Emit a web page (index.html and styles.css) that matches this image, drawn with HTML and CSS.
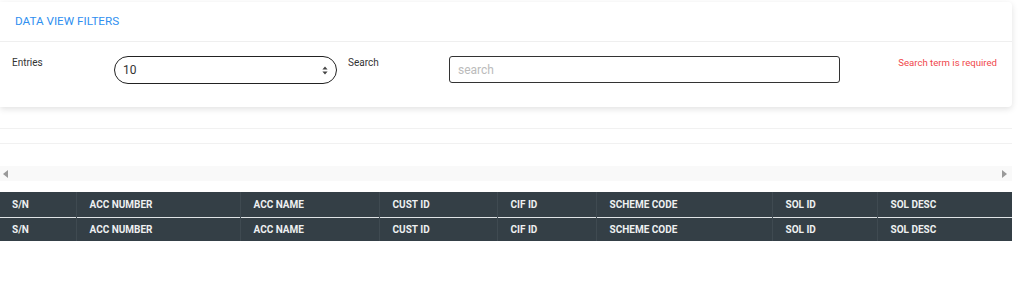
FILE: index.html
```html
<!DOCTYPE html>
<html lang="en">
<head>
  <meta charset="UTF-8" />
  <meta name="viewport" content="width=device-width, initial-scale=1.0" />
  <title>Data View</title>
  <link rel="stylesheet" href="styles.css">
</head>
<body>
  <div class="container">
    <div class="filter-card">
      <div class="card-header">DATA VIEW FILTERS</div>
      <div class="card-body">
        <label class="field-label" for="entries">Entries</label>
        <div class="select-wrap">
          <select id="entries" class="entries-select">
            <option>10</option>
            <option>25</option>
            <option>50</option>
            <option>100</option>
          </select>
          <span class="select-arrows">
            <svg width="6" height="9" viewBox="0 0 6 9"><path d="M3 0.5 L5.6 3.6 H0.4 Z M3 8.5 L5.6 5.4 H0.4 Z" fill="#444"/></svg>
          </span>
        </div>
        <label class="field-label search-label" for="searchInput">Search</label>
        <input type="text" id="searchInput" class="search-input" placeholder="search" />
        <div class="error-text">Search term is required</div>
      </div>
    </div>

    <hr class="divider first">
    <hr class="divider">

    <div class="scroll-track">
      <span class="arrow left"></span>
      <span class="arrow right"></span>
    </div>

    <table class="data-table">
      <thead>
        <tr>
          <th class="c-sn">S/N</th>
          <th class="c-accno">ACC NUMBER</th>
          <th class="c-accname">ACC NAME</th>
          <th class="c-cust">CUST ID</th>
          <th class="c-cif">CIF ID</th>
          <th class="c-scheme">SCHEME CODE</th>
          <th class="c-sol">SOL ID</th>
          <th class="c-desc">SOL DESC</th>
        </tr>
      </thead>
      <tfoot>
        <tr>
          <th>S/N</th>
          <th>ACC NUMBER</th>
          <th>ACC NAME</th>
          <th>CUST ID</th>
          <th>CIF ID</th>
          <th>SCHEME CODE</th>
          <th>SOL ID</th>
          <th>SOL DESC</th>
        </tr>
      </tfoot>
    </table>
  </div>
</body>
</html>
```

FILE: styles.css
```css
body {
  font-family: Roboto, "Liberation Sans", Arial, sans-serif;
  margin: 0;
  padding: 0;
  background-color: #fff;
  color: #333;
}
.container {
  width: 1012px;
  padding-top: 2px;
}
.filter-card {
  background-color: #fff;
  border-radius: 0 4px 4px 0;
  box-shadow: 0 2px 6px rgba(0, 0, 0, 0.12);
}
.card-header {
  height: 39px;
  line-height: 39px;
  padding-left: 15px;
  font-size: 11.7px;
  color: #2f8ff0;
  border-bottom: 1px solid #efefef;
}
.card-body {
  display: grid;
  grid-template-columns: 102px 223px 112px 391px 1fr;
  padding: 14px 15px 23px 12px;
  align-items: start;
}
.field-label {
  font-size: 10px;
  color: #333;
  margin-top: 1px;
  line-height: 12px;
}
.search-label {
  margin-left: 11px;
}
.select-wrap {
  position: relative;
  width: 223px;
}
.entries-select {
  appearance: none;
  -webkit-appearance: none;
  width: 223px;
  height: 28px;
  border: 1px solid #222;
  border-radius: 14px;
  background: #fff;
  padding: 0 0 0 8px;
  font-family: inherit;
  font-size: 12px;
  color: #333;
  outline: none;
}
.select-arrows {
  position: absolute;
  right: 9px;
  top: 10px;
  line-height: 0;
}
.search-input {
  width: 391px;
  height: 27px;
  box-sizing: border-box;
  border: 1px solid #333;
  border-radius: 3px;
  padding: 0 8px;
  font-family: inherit;
  font-size: 12px;
  outline: none;
}
.search-input::placeholder {
  color: #bbb;
}
.error-text {
  font-size: 9.6px;
  color: #f0484b;
  text-align: right;
  line-height: 12px;
  margin-top: 1px;
}
.divider {
  border: none;
  border-top: 1px solid #f1f1f1;
  margin: 0;
}
.divider.first {
  margin-top: 21px;
}
.divider + .divider {
  margin-top: 14px;
}
.scroll-track {
  display: flex;
  justify-content: space-between;
  align-items: center;
  height: 15px;
  margin-top: 22px;
  padding: 0 5px 0 3px;
  background-color: #f9f9f9;
}
.arrow {
  width: 0;
  height: 0;
  border-top: 4.5px solid transparent;
  border-bottom: 4.5px solid transparent;
}
.arrow.left {
  border-right: 5px solid #9a9a9a;
}
.arrow.right {
  border-left: 5px solid #9a9a9a;
}
.data-table {
  width: 1012px;
  margin-top: 11px;
  border-collapse: collapse;
  table-layout: fixed;
  background-color: #343f46;
}
.data-table th {
  box-sizing: border-box;
  height: 24px;
  padding: 0 0 0 13px;
  font-size: 10px;
  font-weight: bold;
  color: #eef0f1;
  text-align: left;
  border-left: 1px solid #3f4a51;
  white-space: nowrap;
}
.data-table th:first-child {
  border-left: none;
  padding-left: 12px;
}
.data-table thead th {
  height: 25px;
}
.data-table tfoot tr {
  border-top: 1px solid #dfe3e5;
}
.c-sn { width: 76px; }
.c-accno { width: 164px; }
.c-accname { width: 139px; }
.c-cust { width: 118px; }
.c-cif { width: 99px; }
.c-scheme { width: 176px; }
.c-sol { width: 105px; }
.c-desc { width: 135px; }
```
